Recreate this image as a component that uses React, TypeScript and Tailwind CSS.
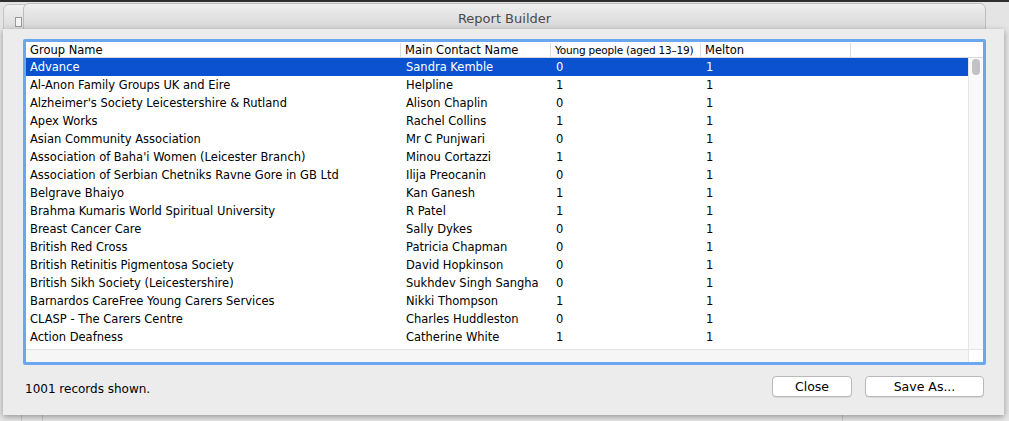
const rows: [string, string, string, string][] = [
  ['Advance', 'Sandra Kemble', '0', '1'],
  ['Al-Anon Family Groups UK and Eire', 'Helpline', '1', '1'],
  ["Alzheimer's Society Leicestershire & Rutland", 'Alison Chaplin', '0', '1'],
  ['Apex Works', 'Rachel Collins', '1', '1'],
  ['Asian Community Association', 'Mr C Punjwari', '0', '1'],
  ["Association of Baha'i Women (Leicester Branch)", 'Minou Cortazzi', '1', '1'],
  ['Association of Serbian Chetniks Ravne Gore in GB Ltd', 'Ilija Preocanin', '0', '1'],
  ['Belgrave Bhaiyo', 'Kan Ganesh', '1', '1'],
  ['Brahma Kumaris World Spiritual University', 'R Patel', '1', '1'],
  ['Breast Cancer Care', 'Sally Dykes', '0', '1'],
  ['British Red Cross', 'Patricia Chapman', '0', '1'],
  ['British Retinitis Pigmentosa Society', 'David Hopkinson', '0', '1'],
  ['British Sikh Society (Leicestershire)', 'Sukhdev Singh Sangha', '0', '1'],
  ['Barnardos CareFree Young Carers Services', 'Nikki Thompson', '1', '1'],
  ['CLASP - The Carers Centre', 'Charles Huddleston', '0', '1'],
  ['Action Deafness', 'Catherine White', '1', '1'],
];

const font = "font-['DejaVu_Sans',sans-serif]";

export default function App() {
  return (
    <div className={`relative w-[1009px] h-[421px] overflow-hidden bg-[#e4e4e4] border-t-2 border-[#2e2e2e] ${font}`}>
      {/* window behind, left fragment */}
      <div className="absolute left-[3px] top-[2px] w-[30px] h-[30px] bg-gradient-to-b from-[#f0f0f0] to-[#d8d8d8] border border-[#c4c4c4] rounded-tl-md">
        <div className="ml-[11px] mt-[12px] w-[7px] h-[10px] border border-[#9a9a9a] bg-[#f4f4f4]" />
      </div>

      {/* parent window title bar */}
      <div className="absolute left-[23px] top-[1px] w-[963px] h-[28px] rounded-t-[6px] bg-gradient-to-b from-[#efefef] to-[#d5d5d5] border border-[#bdbdbd] flex justify-center pt-[5px]">
        <span className="text-[13px] text-[#4a4a4a]">Report Builder</span>
      </div>

      {/* bottom strip of background window */}
      <div className="absolute left-0 right-0 top-[412px] h-[10px] bg-[#e6e6e6] flex">
        <div className="w-[22px] border-r border-[#c9c9c9]" />
        <div className="w-[21px] border-r border-[#c9c9c9]" />
        <div className="w-[800px] border-r border-[#c9c9c9]" />
      </div>

      {/* sheet */}
      <div className="absolute left-[3px] top-[27px] w-[1001px] h-[386px] bg-[#ececec] shadow-[0_2px_6px_rgba(0,0,0,0.35)] flex flex-col pl-[20px] pr-[18px] pt-[10px]">
        <div className="h-[326px] border-[3px] border-[#6aa7f0] rounded-[2px] bg-white flex flex-col overflow-hidden">
          {/* header */}
          <div className="h-[16px] flex text-[11.5px] text-black border-b border-[#d8d8d8] shrink-0 pt-[1px]">
            <div className="w-[375px] pl-[4px] leading-[15px] border-r border-[#dcdcdc]">Group Name</div>
            <div className="w-[150px] pl-[4px] leading-[15px] border-r border-[#dcdcdc]">Main Contact Name</div>
            <div className="w-[150px] pl-[4px] leading-[15px] border-r border-[#dcdcdc] text-[10.5px] tracking-[-0.2px]">Young people (aged 13–19)</div>
            <div className="w-[150px] pl-[4px] leading-[15px] border-r border-[#dcdcdc]">Melton</div>
            <div className="flex-1" />
          </div>
          <div className="flex flex-1 min-h-0">
            <div className="flex-1 flex flex-col">
              {rows.map((r, i) => (
                <div
                  key={r[0]}
                  className={`h-[18px] flex text-[11.5px] leading-[18px] shrink-0 ${
                    i === 0 ? 'bg-[#0b52d1] text-white' : 'text-black'
                  }`}
                >
                  <div className="w-[375px] pl-[4px] whitespace-nowrap">{r[0]}</div>
                  <div className="w-[150px] pl-[5px] whitespace-nowrap">{r[1]}</div>
                  <div className="w-[150px] pl-[5px]">{r[2]}</div>
                  <div className="w-[150px] pl-[5px]">{r[3]}</div>
                </div>
              ))}
              <div className="mt-[3px] flex-1 border-t border-[#e3e3e3] bg-[#f6f6f6]" />
            </div>
            {/* vertical scrollbar */}
            <div className="w-[15px] bg-[#f9f9f9] border-l border-[#e6e6e6] flex flex-col">
              <div className="mx-auto mt-[1px] w-[8px] h-[16px] rounded-full bg-[#c2c2c2]" />
              <div className="flex-1" />
              <div className="h-[13px] bg-white border-t border-[#e3e3e3]" />
            </div>
          </div>
        </div>

        {/* footer */}
        <div className="flex items-start mt-[11px]">
          <span className="ml-[2px] mt-[4px] text-[12px] text-black">1001 records shown.</span>
          <div className="flex-1" />
          <button className="w-[80px] h-[21px] mr-[13px] bg-white rounded-[4px] border border-[#b9b9b9] shadow-[0_1px_0_rgba(0,0,0,0.08)] text-[12.5px] text-black leading-[19px]">
            Close
          </button>
          <button className="w-[119px] h-[21px] mr-[2px] bg-white rounded-[4px] border border-[#b9b9b9] shadow-[0_1px_0_rgba(0,0,0,0.08)] text-[12.5px] text-black leading-[19px]">
            Save As...
          </button>
        </div>
      </div>
    </div>
  );
}
